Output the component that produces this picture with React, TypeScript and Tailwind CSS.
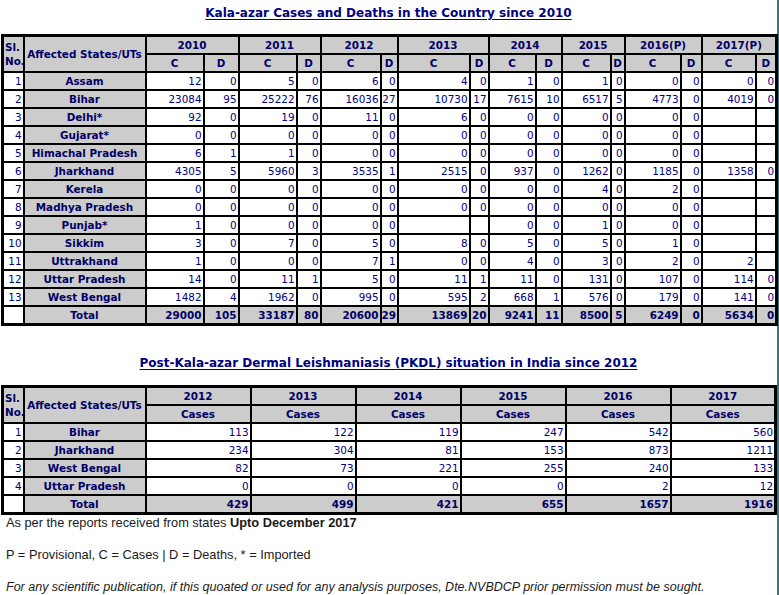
import React from "react";

type Pair = [string, string];

const KALA_AZAR: { state: string; cells: Pair[] }[] = [
  { state: "Assam", cells: [["12", "0"], ["5", "0"], ["6", "0"], ["4", "0"], ["1", "0"], ["1", "0"], ["0", "0"], ["0", "0"]] },
  { state: "Bihar", cells: [["23084", "95"], ["25222", "76"], ["16036", "27"], ["10730", "17"], ["7615", "10"], ["6517", "5"], ["4773", "0"], ["4019", "0"]] },
  { state: "Delhi*", cells: [["92", "0"], ["19", "0"], ["11", "0"], ["6", "0"], ["0", "0"], ["0", "0"], ["0", "0"], ["", ""]] },
  { state: "Gujarat*", cells: [["0", "0"], ["0", "0"], ["0", "0"], ["0", "0"], ["0", "0"], ["0", "0"], ["0", "0"], ["", ""]] },
  { state: "Himachal Pradesh", cells: [["6", "1"], ["1", "0"], ["0", "0"], ["0", "0"], ["0", "0"], ["0", "0"], ["0", "0"], ["", ""]] },
  { state: "Jharkhand", cells: [["4305", "5"], ["5960", "3"], ["3535", "1"], ["2515", "0"], ["937", "0"], ["1262", "0"], ["1185", "0"], ["1358", "0"]] },
  { state: "Kerela", cells: [["0", "0"], ["0", "0"], ["0", "0"], ["0", "0"], ["0", "0"], ["4", "0"], ["2", "0"], ["", ""]] },
  { state: "Madhya Pradesh", cells: [["0", "0"], ["0", "0"], ["0", "0"], ["0", "0"], ["0", "0"], ["0", "0"], ["0", "0"], ["", ""]] },
  { state: "Punjab*", cells: [["1", "0"], ["0", "0"], ["0", "0"], ["", ""], ["0", "0"], ["1", "0"], ["0", "0"], ["", ""]] },
  { state: "Sikkim", cells: [["3", "0"], ["7", "0"], ["5", "0"], ["8", "0"], ["5", "0"], ["5", "0"], ["1", "0"], ["", ""]] },
  { state: "Uttrakhand", cells: [["1", "0"], ["0", "0"], ["7", "1"], ["0", "0"], ["4", "0"], ["3", "0"], ["2", "0"], ["2", ""]] },
  { state: "Uttar Pradesh", cells: [["14", "0"], ["11", "1"], ["5", "0"], ["11", "1"], ["11", "0"], ["131", "0"], ["107", "0"], ["114", "0"]] },
  { state: "West Bengal", cells: [["1482", "4"], ["1962", "0"], ["995", "0"], ["595", "2"], ["668", "1"], ["576", "0"], ["179", "0"], ["141", "0"]] },
];

const KALA_TOTAL: Pair[] = [["29000", "105"], ["33187", "80"], ["20600", "29"], ["13869", "20"], ["9241", "11"], ["8500", "5"], ["6249", "0"], ["5634", "0"]];

const YEARS = ["2010", "2011", "2012", "2013", "2014", "2015", "2016(P)", "2017(P)"];
// C / D column widths per year, read off the screenshot
const COLS = [58, 35, 58, 24, 60, 17, 72, 19, 47, 26, 49, 14, 56, 21, 54, 21];

const PKDL = [
  { state: "Bihar", cases: ["113", "122", "119", "247", "542", "560"] },
  { state: "Jharkhand", cases: ["234", "304", "81", "153", "873", "1211"] },
  { state: "West Bengal", cases: ["82", "73", "221", "255", "240", "133"] },
  { state: "Uttar Pradesh", cases: ["0", "0", "0", "0", "2", "12"] },
];
const PKDL_TOTAL = ["429", "499", "421", "655", "1657", "1916"];
const PKDL_YEARS = ["2012", "2013", "2014", "2015", "2016", "2017"];

const head = "border-2 border-black bg-[#cccccc] text-[#000066] font-bold text-center p-0 h-4 leading-4";
const num = "border-2 border-black bg-white text-[#000080] text-right p-0 pr-[1px] h-4 leading-4";
const state = "border-2 border-black bg-[#cccccc] text-[#000066] font-bold text-center p-0 h-4 leading-4";
const total = "border-2 border-black bg-[#cccccc] text-[#000066] font-bold text-right p-0 pr-[1px] h-4 leading-4";

const Title = ({ children }: { children: React.ReactNode }) => (
  <h2 className="text-center text-[12px] leading-[18px] font-bold text-[#000080] underline underline-offset-2">
    {children}
  </h2>
);

const SlHead = () => (
  <th rowSpan={2} className={`${head} text-left leading-[14px] pl-[1px]`}>
    Sl.
    <br />
    No.
  </th>
);

export default function App() {
  return (
    <div className="w-[779px] min-h-[595px] bg-white border-r-2 border-[#3f7484] font-['DejaVu_Sans',Verdana,sans-serif] text-[10.4px]">
      <div className="pt-[4px]">
        <Title>Kala-azar Cases and Deaths in the Country since 2010</Title>
      </div>

      <table className="mt-[12px] ml-[1px] w-[776px] table-fixed border-collapse border-[3px] border-black">
        <colgroup>
          <col className="w-[21px]" />
          <col className="w-[122px]" />
          {COLS.map((w, i) => (
            <col key={i} style={{ width: w }} />
          ))}
        </colgroup>
        <thead>
          <tr>
            <SlHead />
            <th rowSpan={2} className={head}>Affected States/UTs</th>
            {YEARS.map((y) => (
              <th key={y} colSpan={2} className={head}>{y}</th>
            ))}
          </tr>
          <tr>
            {YEARS.map((y) => (
              <React.Fragment key={y}>
                <th className={head}>C</th>
                <th className={head}>D</th>
              </React.Fragment>
            ))}
          </tr>
        </thead>
        <tbody>
          {KALA_AZAR.map((row, i) => (
            <tr key={row.state}>
              <td className={num}>{i + 1}</td>
              <td className={state}>{row.state}</td>
              {row.cells.map(([c, d], j) => (
                <React.Fragment key={j}>
                  <td className={num}>{c}</td>
                  <td className={num}>{d}</td>
                </React.Fragment>
              ))}
            </tr>
          ))}
          <tr>
            <td className={num}></td>
            <td className={state}>Total</td>
            {KALA_TOTAL.map(([c, d], j) => (
              <React.Fragment key={j}>
                <td className={total}>{c}</td>
                <td className={total}>{d}</td>
              </React.Fragment>
            ))}
          </tr>
        </tbody>
      </table>

      <div className="mt-[28px]">
        <Title>Post-Kala-azar Dermal Leishmaniasis (PKDL) situation in India since 2012</Title>
      </div>

      <table className="mt-[13px] ml-[1px] w-[776px] table-fixed border-collapse border-[3px] border-black">
        <colgroup>
          <col className="w-[21px]" />
          <col className="w-[122px]" />
          {PKDL_YEARS.map((y) => (
            <col key={y} className="w-[105px]" />
          ))}
        </colgroup>
        <thead>
          <tr>
            <SlHead />
            <th rowSpan={2} className={head}>Affected States/UTs</th>
            {PKDL_YEARS.map((y) => (
              <th key={y} className={head}>{y}</th>
            ))}
          </tr>
          <tr>
            {PKDL_YEARS.map((y) => (
              <th key={y} className={head}>Cases</th>
            ))}
          </tr>
        </thead>
        <tbody>
          {PKDL.map((row, i) => (
            <tr key={row.state}>
              <td className={num}>{i + 1}</td>
              <td className={state}>{row.state}</td>
              {row.cases.map((c, j) => (
                <td key={j} className={num}>{c}</td>
              ))}
            </tr>
          ))}
          <tr>
            <td className={num}></td>
            <td className={state}>Total</td>
            {PKDL_TOTAL.map((c, j) => (
              <td key={j} className={total}>{c}</td>
            ))}
          </tr>
        </tbody>
      </table>

      <div className="pl-[6px] font-['Liberation_Sans',Arial,sans-serif] text-[12.8px] leading-[16px] text-[#1a1a1a]">
        <p>
          As per the reports received from states <b>Upto December 2017</b>
        </p>
        <p className="mt-[16px]">P = Provisional, C = Cases | D = Deaths, * = Imported</p>
        <p className="mt-[16px] italic text-[12.5px]">
          For any scientific publication, if this quoated or used for any analysis purposes, Dte.NVBDCP prior permission must be sought.
        </p>
      </div>
    </div>
  );
}
